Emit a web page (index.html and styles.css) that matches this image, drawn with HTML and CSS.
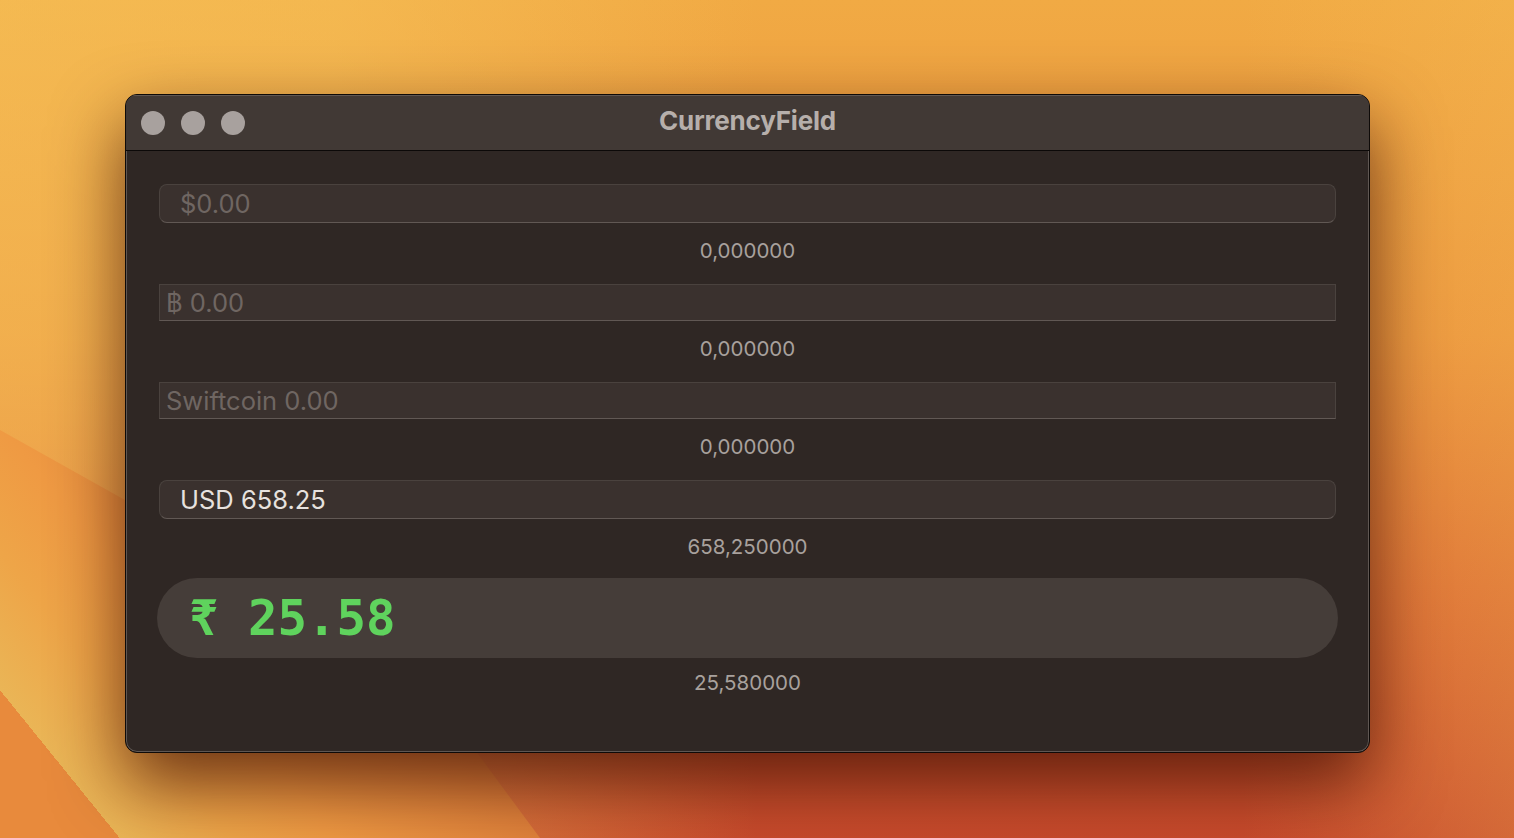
FILE: index.html
```html
<!DOCTYPE html>
<html lang="en">
<head>
    <meta charset="UTF-8">
    <meta name="viewport" content="width=device-width, initial-scale=1.0">
    <title>CurrencyField</title>
    <link rel="stylesheet" href="styles.css">
</head>
<body>
    <div class="desktop">
        <div class="window">
            <div class="titlebar">
                <div class="lights">
                    <span class="light"></span>
                    <span class="light"></span>
                    <span class="light"></span>
                </div>
                <div class="title">CurrencyField</div>
            </div>

            <div class="content">
                <div class="row">
                    <div class="field rounded placeholder">$0.00</div>
                    <div class="value">0,000000</div>
                </div>
                <div class="row">
                    <div class="field square placeholder">฿ 0.00</div>
                    <div class="value">0,000000</div>
                </div>
                <div class="row">
                    <div class="field square placeholder">Swiftcoin 0.00</div>
                    <div class="value">0,000000</div>
                </div>
                <div class="row">
                    <div class="field rounded">USD 658.25</div>
                    <div class="value">658,250000</div>
                </div>
                <div class="row big-row">
                    <div class="field big">₹ 25.58</div>
                    <div class="value big-value">25,580000</div>
                </div>
            </div>
        </div>
    </div>
</body>
</html>
```

FILE: styles.css
```css
body {
    margin: 0;
    font-family: Inter, "Noto Sans", sans-serif;
}

/* wallpaper */
.desktop {
    position: relative;
    width: 1514px;
    height: 838px;
    overflow: hidden;
    padding: 94px 0 0 125px;
    box-sizing: border-box;
    background:
        linear-gradient(90deg, rgba(247, 198, 92, 0.55) 0%, rgba(247, 198, 92, 0.5) 22%, rgba(247, 198, 92, 0) 50%, rgba(247, 198, 92, 0) 82%, rgba(247, 198, 92, 0.25) 100%),
        linear-gradient(180deg, #f1aa44 0%, #eb933c 40%, #dc6c33 70%, #c84a2c 100%);
}

/* the light band on the lower left */
.desktop::before {
    content: "";
    position: absolute;
    inset: 0;
    clip-path: polygon(0 430px, 407px 658px, 540px 838px, 0 838px);
    background: linear-gradient(51deg, #e88a3c 0 93px, #eab556 93px, #eea548 180px, #ef9a43 260px, #e0823b 422px);
}

.window {
    position: relative;
    width: 1245px;
    height: 659px;
    box-sizing: border-box;
    border: 1px solid #0e0a08;
    border-radius: 12px;
    background: #2f2724;
    box-shadow: inset 0 0 0 1px #5f5753, 0 30px 70px rgba(55, 10, 0, 0.72);
    overflow: hidden;
    display: flex;
    flex-direction: column;
}

.titlebar {
    height: 56px;
    flex: none;
    box-sizing: border-box;
    background: #413935;
    border-bottom: 1px solid #0c0908;
    border-top: 1px solid #5f5753;
    display: flex;
    align-items: center;
    position: relative;
}

.lights {
    display: flex;
    gap: 16px;
    padding-left: 15px;
}

.light {
    width: 24px;
    height: 24px;
    border-radius: 50%;
    background: #a8a19e;
}

.title {
    position: absolute;
    left: 0;
    right: 0;
    top: 9px;
    text-align: center;
    font-size: 26px;
    font-weight: 700;
    color: #b6afab;
    letter-spacing: -0.2px;
}

.content {
    padding: 33px 33px 0;
    display: flex;
    flex-direction: column;
    gap: 23px;
}

.row {
    display: flex;
    flex-direction: column;
}

.big-row {
    margin-top: -2px;
}

.field {
    box-sizing: border-box;
    background: #3a312e;
    border: 1px solid #4a423e;
    border-bottom-color: #615854;
    font-size: 25.5px;
    color: #e7e2df;
    display: flex;
    align-items: center;
}

.rounded {
    height: 39px;
    border-radius: 8px;
    padding-left: 20px;
}

.square {
    height: 37px;
    padding-left: 6px;
}

.placeholder {
    color: #6f6662;
}

.big {
    height: 80px;
    margin: 0 -2px;
    border: none;
    border-radius: 40px;
    background: #453d39;
    padding-left: 32px;
    font-family: "DejaVu Sans Mono", "Liberation Mono", monospace;
    font-weight: 700;
    font-size: 49px;
    color: #5fd35d;
}

.value {
    margin-top: 18px;
    line-height: 20px;
    font-size: 20.5px;
    text-align: center;
    color: #a8a19d;
}

.big-value {
    margin-top: 15px;
}
```
